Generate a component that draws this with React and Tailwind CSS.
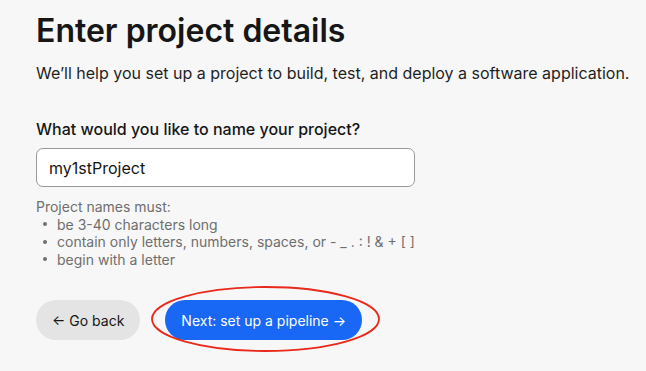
import React from "react";

export default function App() {
  return (
    <div className="relative w-[646px] h-[371px] overflow-hidden bg-[#f7f7f7] text-[#161616]" style={{ fontFamily: "Inter, 'Noto Sans', sans-serif" }}>
      <div className="pl-9 pt-[11px]">
        <h1 className="text-[32px] leading-[40px] font-semibold">Enter project details</h1>
        <p className="mt-[11px] text-[16px] leading-[22px] text-[#1f1f1f] whitespace-nowrap">We’ll help you set up a project to build, test, and deploy a software application.</p>
        <label className="block mt-[34px] text-[16px] leading-[22px] font-medium">What would you like to name your project?</label>
        <div className="mt-[8px] w-[379px] h-[39px] rounded-[7px] border border-[#9a9a9a] bg-white flex items-center px-[12px] text-[16px]">my1stProject</div>
        <div className="mt-[11px] text-[14px] leading-[17.5px] text-[#6f6f6f]">
          <div>Project names must:</div>
          <ul>
            <li className="flex items-center"><span className="ml-[7px] mr-[10px] w-[4px] h-[4px] rounded-full bg-[#6f6f6f]"></span>be 3-40 characters long</li>
            <li className="flex items-center"><span className="ml-[7px] mr-[10px] w-[4px] h-[4px] rounded-full bg-[#6f6f6f]"></span>contain only letters, numbers, spaces, or - _ . : ! &amp; + [ ]</li>
            <li className="flex items-center"><span className="ml-[7px] mr-[10px] w-[4px] h-[4px] rounded-full bg-[#6f6f6f]"></span>begin with a letter</li>
          </ul>
        </div>
        <div className="mt-[32px] flex items-center gap-[25px]">
          <button className="h-[40px] px-[16px] rounded-full bg-[#e4e4e4] text-[14px] text-[#161616]">← Go back</button>
          <button className="h-[40px] px-[16px] rounded-full bg-[#1867f5] text-[14px] text-white">Next: set up a pipeline →</button>
        </div>
      </div>
      <svg className="absolute left-[150px] top-[285px]" width="231" height="68" viewBox="0 0 231 68">
        <ellipse cx="115.5" cy="34" rx="113.5" ry="32" fill="none" stroke="#e8291c" strokeWidth="1.8" />
      </svg>
    </div>
  );
}
